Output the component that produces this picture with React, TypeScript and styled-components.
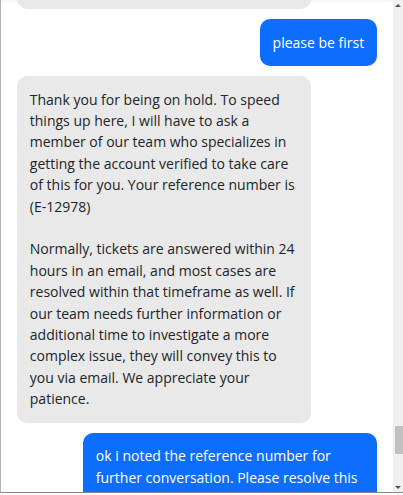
import React, { useLayoutEffect, useRef } from "react";
import styled, { createGlobalStyle } from "styled-components";

const GlobalStyle = createGlobalStyle`
  html, body { margin: 0; padding: 0; background: #ffffff; }
  body { font-family: "Open Sans", "Noto Sans", sans-serif; }
  * { box-sizing: border-box; }
`;

const Frame = styled.div`
  display: flex;
  width: 403px;
  height: 493px;
  border-left: 1px solid #b4b4b4;
  border-bottom: 1px solid #8a8a8a;
  background: #ffffff;
`;

const Viewport = styled.div`
  flex: 1;
  min-width: 0;
  overflow: hidden;
  box-shadow: inset 0 4px 4px -3px rgba(0, 0, 0, 0.06);
`;

const Thread = styled.div`
  display: flex;
  flex-direction: column;
  gap: 10px;
  padding: 16px;
`;

const Bubble = styled.div<{ $mine?: boolean }>`
  align-self: ${(p) => (p.$mine ? "flex-end" : "flex-start")};
  max-width: 294px;
  padding: 12.8px;
  border-radius: 10px;
  background: ${(p) => (p.$mine ? "#0d6efd" : "#e9e9e9")};
  color: ${(p) => (p.$mine ? "#ffffff" : "#212529")};
  font-family: "Open Sans", "Noto Sans", sans-serif;
  font-size: 14px;
  line-height: 21.4px;
  white-space: pre-wrap;
  word-wrap: break-word;
`;

const Scrollbar = styled.div`
  width: 10px;
  flex: none;
  display: flex;
  flex-direction: column;
  align-items: center;
  background: #f0f0f0;
`;

const Arrow = styled.div<{ $down?: boolean }>`
  height: 10px;
  width: 100%;
  display: flex;
  align-items: center;
  justify-content: center;
  &::before {
    content: "";
    width: 0;
    height: 0;
    border-left: 3.5px solid transparent;
    border-right: 3.5px solid transparent;
    ${(p) =>
      p.$down
        ? "border-top: 3.5px solid #505050;"
        : "border-bottom: 3.5px solid #505050;"}
  }
`;

const Track = styled.div`
  flex: 1;
  width: 100%;
  display: flex;
  flex-direction: column;
  justify-content: flex-end;
  align-items: flex-end;
  padding-bottom: 28px;
`;

const Thumb = styled.div`
  width: 8px;
  height: 28px;
  background: #c1c1c1;
`;

type Msg = { mine?: boolean; text: string };

const messages: Msg[] = [
  {
    text:
      "I understand. Let me look into this for you and see what I can do to get your account verified as quickly as possible.",
  },
  { mine: true, text: "please be first" },
  {
    text:
      "Thank you for being on hold. To speed things up here, I will have to ask a member of our team who specializes in getting the account verified to take care of this for you. Your reference number is (E-12978)\n\nNormally, tickets are answered within 24 hours in an email, and most cases are resolved within that timeframe as well. If our team needs further information or additional time to investigate a more complex issue, they will convey this to you via email. We appreciate your patience.",
  },
  {
    mine: true,
    text:
      "ok i noted the reference number for further conversation. Please resolve this as soon as possible.",
  },
];

export default function App() {
  const viewportRef = useRef<HTMLDivElement>(null);
  const firstRef = useRef<HTMLDivElement>(null);

  useLayoutEffect(() => {
    const vp = viewportRef.current;
    const first = firstRef.current;
    if (vp && first) {
      vp.scrollTop = first.offsetTop + first.offsetHeight - 9;
    }
  }, []);

  return (
    <>
      <GlobalStyle />
      <Frame>
        <Viewport ref={viewportRef}>
          <Thread>
            {messages.map((m, i) => (
              <Bubble key={i} $mine={m.mine} ref={i === 0 ? firstRef : undefined}>
                {m.text}
              </Bubble>
            ))}
          </Thread>
        </Viewport>
        <Scrollbar>
          <Arrow />
          <Track>
            <Thumb />
          </Track>
          <Arrow $down />
        </Scrollbar>
      </Frame>
    </>
  );
}
